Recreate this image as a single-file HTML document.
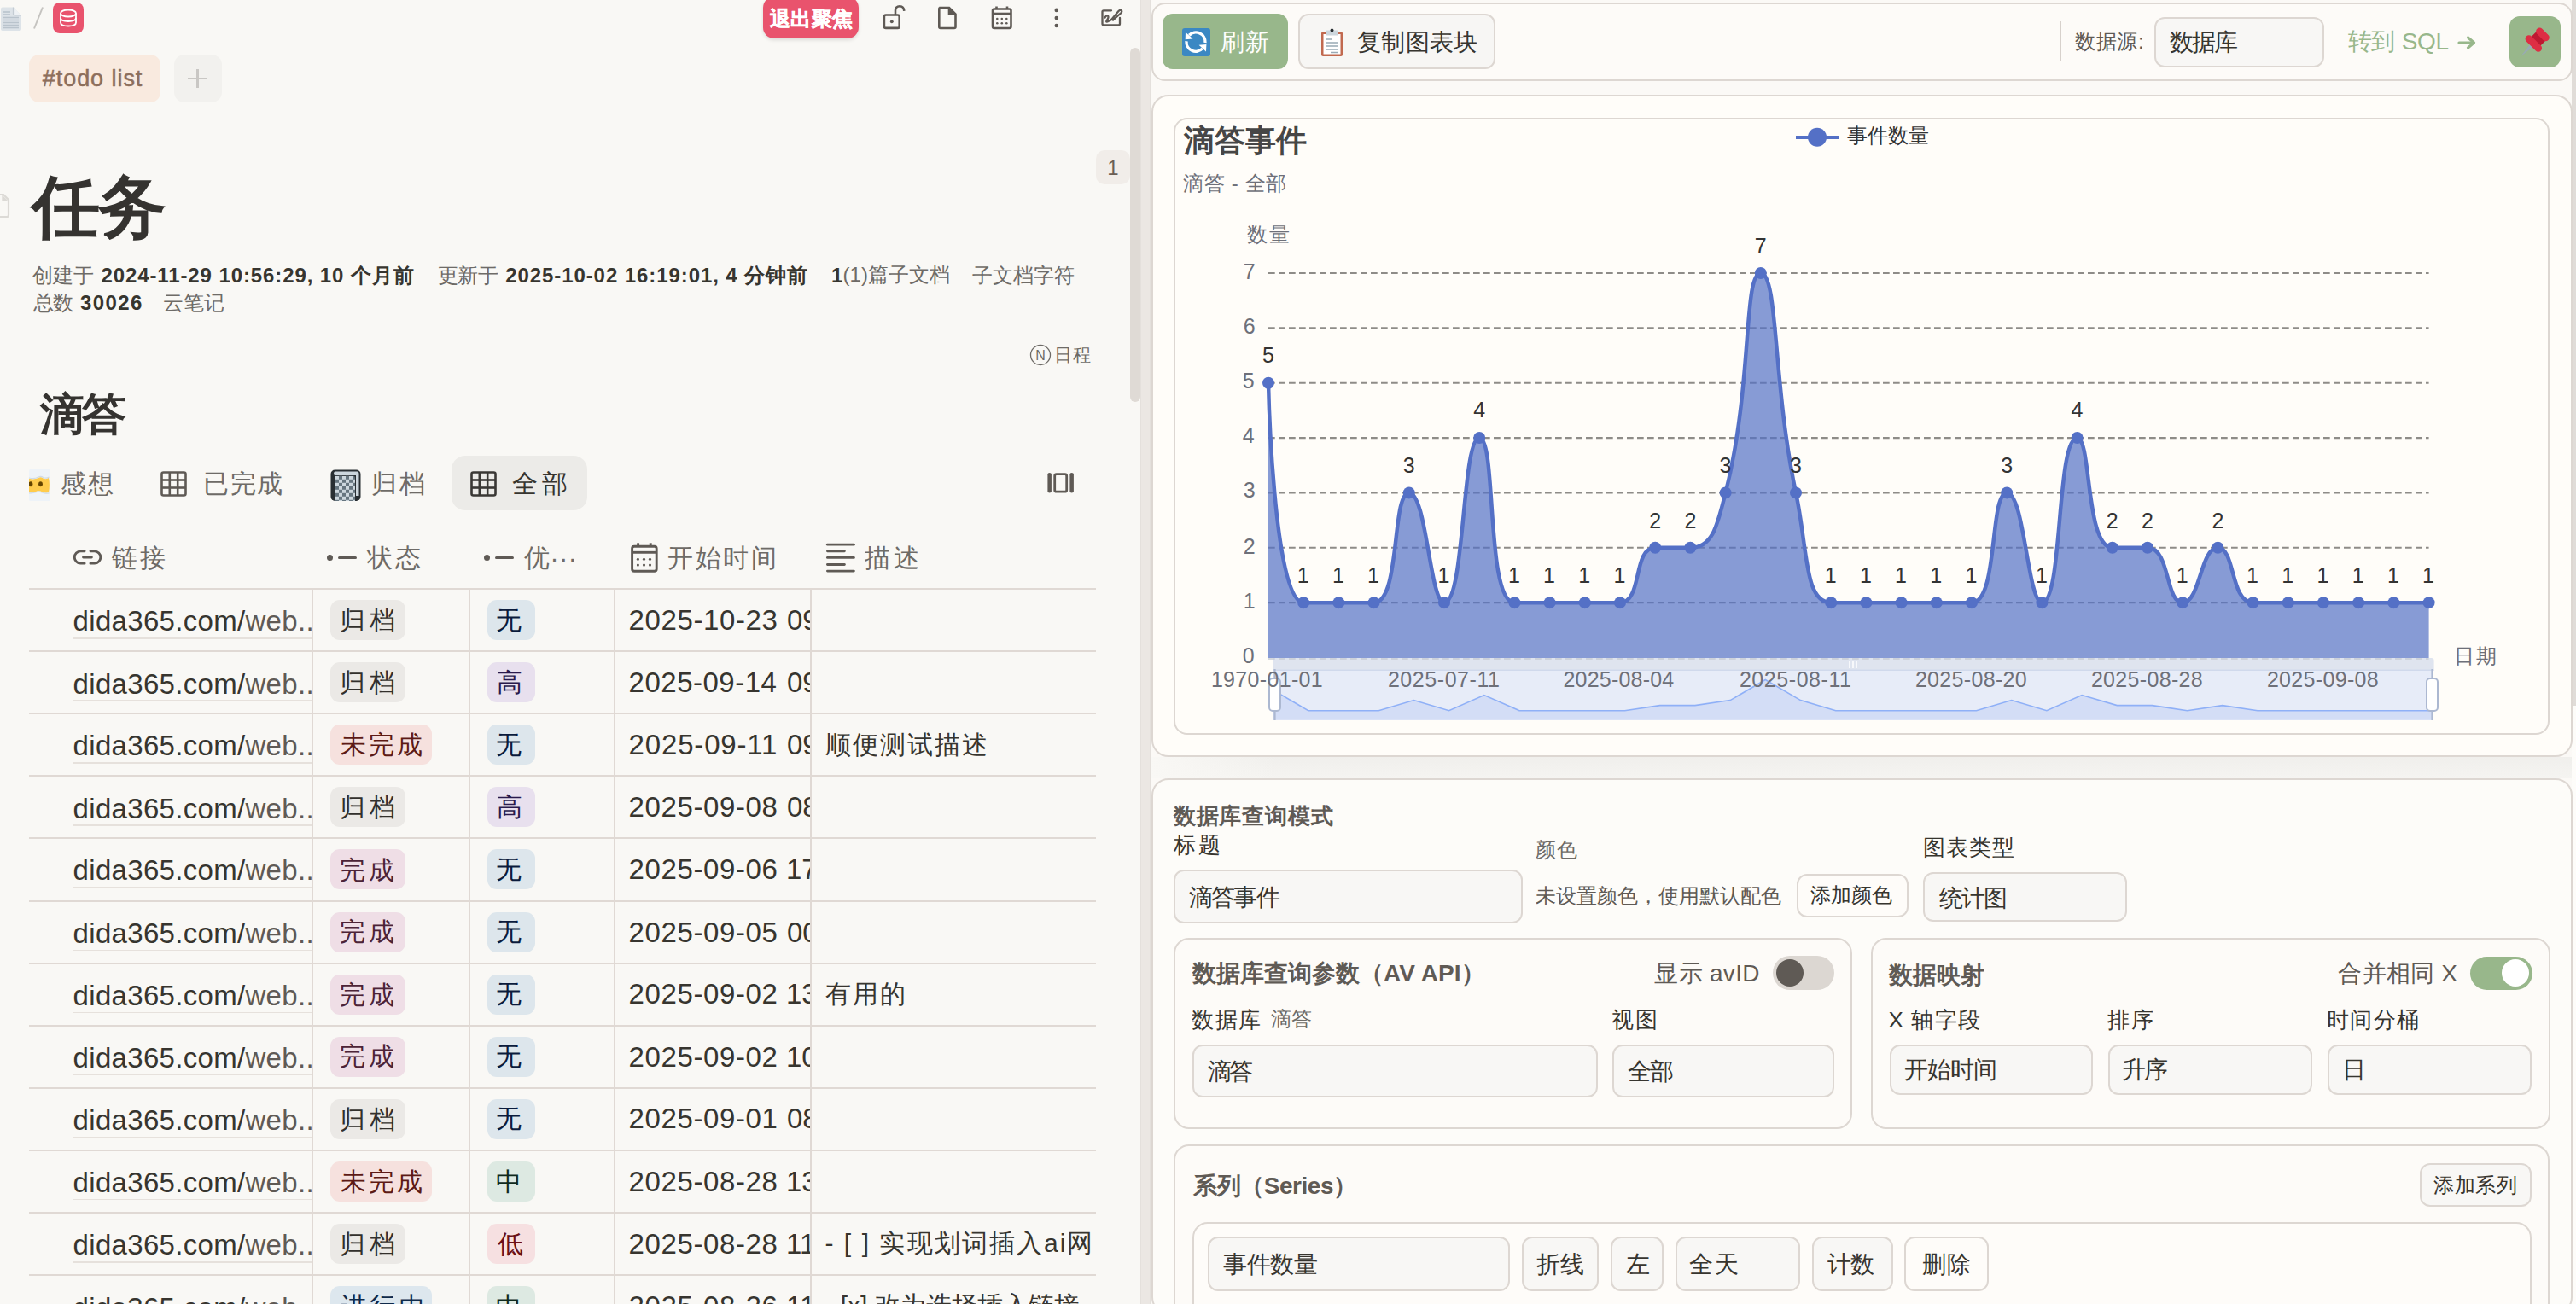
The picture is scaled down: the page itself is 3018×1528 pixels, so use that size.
<!DOCTYPE html>
<html><head><meta charset="utf-8"><style>
html,body{margin:0;padding:0;}
body{width:3018px;height:1528px;overflow:hidden;position:relative;background:#f9f8f5;font-family:'Liberation Sans',sans-serif;}
.t{position:absolute;white-space:nowrap;line-height:1;}
.r{position:absolute;}
b{font-weight:bold;}
</style></head><body>
<div class="r" style="left:0.0px;top:0.0px;width:1336.0px;height:1528.0px;background:#f9f8f5;border-radius:0px;"></div>
<svg class="r" style="left:0px;top:7px" width="28" height="32" viewBox="0 0 28 32"><path d="M2 1.5 H15.5 L25 11 V27 Q25 29 23 29 H3 Q1 29 1 27 V3.5 Q1 1.5 3 1.5Z" fill="#dde3e8"/><path d="M15.5 1.5 V9.5 Q15.5 11 17 11 H25" fill="#eef1f4" stroke="#c4ccd3" stroke-width="1.2"/><g stroke="#b9c3cc" stroke-width="1.6"><line x1="4" y1="7" x2="12" y2="7"/><line x1="4" y1="10" x2="12" y2="10"/><line x1="4" y1="13.5" x2="22" y2="13.5"/><line x1="4" y1="16.5" x2="22" y2="16.5"/><line x1="4" y1="19.5" x2="22" y2="19.5"/><line x1="4" y1="22.5" x2="22" y2="22.5"/><line x1="4" y1="25.5" x2="22" y2="25.5"/></g></svg>
<svg class="r" style="left:38px;top:7px" width="14" height="28"><line x1="12" y1="1.5" x2="2" y2="26.5" stroke="#c5c3c0" stroke-width="2"/></svg>
<div class="r" style="left:62.0px;top:3.0px;width:36.0px;height:36.0px;background:#e9536d;border-radius:8px;"></div>
<svg class="r" style="left:68px;top:9px" width="24" height="24" viewBox="0 0 24 24" fill="none" stroke="#fff" stroke-width="1.8"><ellipse cx="12" cy="6.5" rx="9" ry="4"/><path d="M3 6.5 V17.5 Q3 21.5 12 21.5 Q21 21.5 21 17.5 V6.5"/><path d="M3 12 Q3 16 12 16 Q21 16 21 12"/></svg>
<div class="r" style="left:894.0px;top:-4.5px;width:112.0px;height:49.5px;background:#e9536d;border-radius:13px;box-shadow:0 2px 4px rgba(0,0,0,0.12)"></div>
<div class="t" style="left:902.0px;top:10.0px;font-size:24px;color:#fff;font-weight:bold;letter-spacing:0.33px;-webkit-text-stroke:0.6px #fff">退出聚焦</div>
<svg class="r" style="left:1032px;top:5px" width="30" height="32" viewBox="0 0 30 32" fill="none" stroke="#5f5a55" stroke-width="2.6"><rect x="3.9" y="12.5" width="17.8" height="15.4" rx="2"/><path d="M17 12.5 V7.5 Q17 2.2 22.2 2.2 Q26.8 2.2 27.3 7.8"/><circle cx="12.8" cy="20.3" r="1.9" fill="#5f5a55" stroke="none"/></svg>
<svg class="r" style="left:1097px;top:6px" width="26" height="30" viewBox="0 0 26 30" fill="none" stroke="#5f5a55" stroke-width="2.6"><path d="M3.3 3 H15 L22.5 10.5 V25.5 Q22.5 27 21 27 H4.8 Q3.3 27 3.3 25.5 V4.5 Q3.3 3 4.8 3Z"/><path d="M15 3 V10.5 H22.5" fill="#5f5a55"/></svg>
<svg class="r" style="left:1160px;top:6px" width="28" height="30" viewBox="0 0 28 30" fill="none" stroke="#5f5a55" stroke-width="2.6"><rect x="3" y="4.5" width="21.5" height="22.5" rx="2"/><line x1="3" y1="10" x2="24.5" y2="10"/><line x1="7.5" y1="1.5" x2="7.5" y2="5"/><line x1="20" y1="1.5" x2="20" y2="5"/><g fill="#5f5a55" stroke="none"><circle cx="8.3" cy="16" r="1.3"/><circle cx="13.8" cy="16" r="1.3"/><circle cx="19.3" cy="16" r="1.3"/><circle cx="8.3" cy="21.3" r="1.3"/><circle cx="13.8" cy="21.3" r="1.3"/><circle cx="19.3" cy="21.3" r="1.3"/></g></svg>
<svg class="r" style="left:1232px;top:6px" width="12" height="30" viewBox="0 0 12 30" fill="#5f5a55"><circle cx="5.8" cy="5.9" r="2.3"/><circle cx="5.8" cy="15" r="2.3"/><circle cx="5.8" cy="24" r="2.3"/></svg>
<svg class="r" style="left:1288px;top:8px" width="28" height="24" viewBox="0 0 28 24" fill="none" stroke="#5f5a55" stroke-width="2.3" stroke-linecap="round"><path d="M14 4.3 H5 Q3.5 4.3 3.5 5.8 V19.8 Q3.5 21.3 5 21.3 H22.5 Q24 21.3 24 19.8 V13"/><path d="M6.5 12.5 Q8.5 9.5 10 10.5 Q11.5 12 8.5 16.5 Q7.5 18 9.5 17.5 L13.5 15.5"/><path d="M14.5 14.5 L22.5 5 Q24.5 3 25.8 4.3 Q27 5.6 25 7.5 L16 15.5 Z"/></svg>
<div class="r" style="left:34.0px;top:64.0px;width:154.0px;height:56.0px;background:#f9eadf;border-radius:12px;"></div>
<div class="t" style="left:49.8px;top:79.2px;font-size:27px;color:#8d6e5b;font-weight:normal;letter-spacing:0.94px;-webkit-text-stroke:0.5px #8d6e5b">#todo list</div>
<div class="r" style="left:204.0px;top:64.0px;width:56.0px;height:56.0px;background:#f2f1ee;border-radius:12px;"></div>
<div class="r" style="left:220.3px;top:90.6px;width:22.9px;height:2.8px;background:#c9c7c4;border-radius:0px;"></div>
<div class="r" style="left:230.4px;top:80.5px;width:2.8px;height:22.5px;background:#c9c7c4;border-radius:0px;"></div>
<svg class="r" style="left:-6px;top:226px" width="18" height="30" viewBox="0 0 18 30" fill="none" stroke="#dcdad6" stroke-width="2.2"><path d="M1 2 H10 L16 8 V26 Q16 28 14 28 H1"/><path d="M8.3,2.2 V9.8 H15.8Z" fill="#dcdad6" stroke="none"/></svg>
<div class="t" style="left:37.0px;top:203.1px;font-size:80px;color:#353330;font-weight:bold;letter-spacing:-2.00px;">任务</div>
<div class="t" style="left:38.2px;top:311.0px;font-size:24px;color:#6e6b67;font-weight:normal;letter-spacing:-0.25px;">创建于</div>
<div class="t" style="left:118.4px;top:310.5px;font-size:24px;color:#37352f;font-weight:bold;letter-spacing:0.90px;">2024-11-29 10:56:29, 10 个月前</div>
<div class="t" style="left:512.6px;top:311.0px;font-size:24px;color:#6e6b67;font-weight:normal;letter-spacing:-0.50px;">更新于</div>
<div class="t" style="left:592.2px;top:310.5px;font-size:24px;color:#37352f;font-weight:bold;letter-spacing:0.92px;">2025-10-02 16:19:01, 4 分钟前</div>
<div class="t" style="left:974.0px;top:311.0px;font-size:24px;color:#37352f;font-weight:bold;">1</div>
<div class="t" style="left:987.4px;top:310.0px;font-size:24px;color:#6e6b67;font-weight:normal;letter-spacing:0.08px;">(1)篇子文档</div>
<div class="t" style="left:1138.8px;top:311.0px;font-size:24px;color:#6e6b67;font-weight:normal;letter-spacing:0.00px;">子文档字符</div>
<div class="t" style="left:38.8px;top:342.5px;font-size:24px;color:#6e6b67;font-weight:normal;letter-spacing:-1.00px;">总数</div>
<div class="t" style="left:94.0px;top:343.0px;font-size:24px;color:#37352f;font-weight:bold;letter-spacing:1.38px;">30026</div>
<div class="t" style="left:191.0px;top:342.5px;font-size:24px;color:#6e6b67;font-weight:normal;">云笔记</div>
<div class="r" style="left:1284.0px;top:176.0px;width:40.0px;height:40.0px;background:#f1ede9;border-radius:10px;"></div>
<div class="t" style="left:1284.0px;top:184.5px;width:40px;text-align:center;font-size:24px;color:#6b5f55;font-weight:normal;">1</div>
<svg class="r" style="left:1206px;top:403px" width="27" height="27"><circle cx="13" cy="13" r="11.5" fill="none" stroke="#6e6b67" stroke-width="1.3"/><text x="13" y="19" text-anchor="middle" font-size="16" fill="#6e6b67" font-family="Liberation Sans">N</text></svg>
<div class="t" style="left:1235.0px;top:405.0px;font-size:21px;color:#6e6b67;font-weight:normal;letter-spacing:1.00px;">日程</div>
<div class="r" style="left:1324.0px;top:56.0px;width:12.0px;height:415.0px;background:#dfdad5;border-radius:6px;"></div>
<div class="t" style="left:47.0px;top:459.0px;font-size:52px;color:#353330;font-weight:bold;letter-spacing:-3.00px;">滴答</div>
<svg class="r" style="left:33.9px;top:549.9px" width="25" height="37" viewBox="0 0 25 37"><rect width="25" height="37" rx="1.5" fill="#eef3f8"/><path d="M0 10.8 Q6 12.5 11 10 Q14 8.5 16.5 10.5 Q20 12 23 10 Q24.8 18 23 27 Q19 28 16 26.5 Q11 24.5 8 26 Q4 27.5 0 27Z" fill="#ffcc4d"/><path d="M0 10 Q6 11.5 11 9 Q14 7.5 16.5 9.5 Q20 11 23.5 9" fill="none" stroke="#cfdbe7" stroke-width="1.2"/><path d="M0 27.8 Q4 28.3 8 26.8 Q11 25.3 16 27.3 Q19 28.8 23.5 27.8" fill="none" stroke="#cfdbe7" stroke-width="1.2"/><ellipse cx="2" cy="17.2" rx="2.4" ry="3" fill="#664500"/><ellipse cx="13.5" cy="17.2" rx="2.4" ry="3" fill="#664500"/></svg>
<div class="t" style="left:71.0px;top:552.3px;font-size:30px;color:#6e6b67;font-weight:normal;letter-spacing:2.00px;">感想</div>
<svg class="r" style="left:188px;top:552.2px" width="31" height="30" viewBox="0 0 31 30" fill="none" stroke="#5f5a55" stroke-width="2.6"><rect x="1.5" y="1.5" width="28" height="27" rx="2"/><line x1="10.8" y1="1.5" x2="10.8" y2="28.5"/><line x1="20.2" y1="1.5" x2="20.2" y2="28.5"/><line x1="1.5" y1="10.5" x2="29.5" y2="10.5"/><line x1="1.5" y1="19.5" x2="29.5" y2="19.5"/></svg>
<div class="t" style="left:238.0px;top:552.3px;font-size:30px;color:#6e6b67;font-weight:normal;letter-spacing:1.50px;">已完成</div>
<svg class="r" style="left:387px;top:549.9px" width="36" height="38" viewBox="0 0 36 38"><defs><pattern id="chk" x="6" y="7.8" width="8" height="8" patternUnits="userSpaceOnUse"><rect width="8" height="8" fill="#ccd6dd"/><rect x="4" width="4" height="4" fill="#66757f"/><rect y="4" width="4" height="4" fill="#66757f"/></pattern></defs><rect x="0.5" y="0.5" width="35" height="36.5" rx="5" fill="#292f33"/><rect x="4" y="2.6" width="29.5" height="4.5" rx="2.2" fill="#ccd6dd"/><rect x="30" y="5" width="3.5" height="26" fill="#ccd6dd"/><path d="M6 7.8 H27 Q29 7.8 29 10 V37 H6Z" fill="url(#chk)"/></svg>
<div class="t" style="left:435.0px;top:552.3px;font-size:30px;color:#6e6b67;font-weight:normal;letter-spacing:2.50px;">归档</div>
<div class="r" style="left:529.0px;top:534.0px;width:159.0px;height:64.0px;background:#ecebe8;border-radius:16px;"></div>
<svg class="r" style="left:551px;top:552.2px" width="31" height="30" viewBox="0 0 31 30" fill="none" stroke="#3a3835" stroke-width="2.6"><rect x="1.5" y="1.5" width="28" height="27" rx="2"/><line x1="10.8" y1="1.5" x2="10.8" y2="28.5"/><line x1="20.2" y1="1.5" x2="20.2" y2="28.5"/><line x1="1.5" y1="10.5" x2="29.5" y2="10.5"/><line x1="1.5" y1="19.5" x2="29.5" y2="19.5"/></svg>
<div class="t" style="left:600.0px;top:552.3px;font-size:30px;color:#37352f;font-weight:normal;letter-spacing:5.00px;">全部</div>
<svg class="r" style="left:1225px;top:553px" width="36" height="26" viewBox="0 0 36 26" fill="none" stroke="#5f5a55"><line x1="4.65" y1="3.25" x2="4.65" y2="22.15" stroke-width="4.5" stroke-linecap="round"/><line x1="30.65" y1="3.25" x2="30.65" y2="22.15" stroke-width="4.5" stroke-linecap="round"/><rect x="10.7" y="2.7" width="14" height="20.5" rx="2" stroke-width="2.8"/></svg>
<svg class="r" style="left:84px;top:643px" width="38" height="21" viewBox="0 0 38 21" fill="none" stroke="#5f5a55" stroke-width="2.9" stroke-linecap="round"><path d="M15.1,2.85 H10.4 A7.15,7.15 0 0 0 10.4,17.15 H15.1"/><path d="M21.95,2.85 H26.7 A7.15,7.15 0 0 1 26.7,17.15 H21.95"/><path d="M13.55,10 H23.35"/></svg>
<div class="t" style="left:131.4px;top:639.1px;font-size:30px;color:#6e6b67;font-weight:normal;letter-spacing:3.00px;">链接</div>
<div class="r" style="left:383.2px;top:650.1px;width:6.7px;height:6.7px;background:#5f5a55;border-radius:4px;"></div>
<div class="r" style="left:395.5px;top:652.0px;width:22.2px;height:3.1px;background:#5f5a55;border-radius:2px;"></div>
<div class="t" style="left:429.8px;top:639.1px;font-size:30px;color:#6e6b67;font-weight:normal;letter-spacing:3.50px;">状态</div>
<div class="r" style="left:567.2px;top:650.1px;width:6.7px;height:6.7px;background:#5f5a55;border-radius:4px;"></div>
<div class="r" style="left:579.5px;top:652.0px;width:22.2px;height:3.1px;background:#5f5a55;border-radius:2px;"></div>
<div class="t" style="left:613.8px;top:638.6px;font-size:30px;color:#6e6b67;font-weight:normal;letter-spacing:0.67px;">优···</div>
<svg class="r" style="left:738px;top:635px" width="34" height="38" viewBox="0 0 34 38" fill="none" stroke="#5f5a55" stroke-width="2.9"><rect x="2.6" y="5.3" width="28.6" height="29" rx="2.5"/><line x1="2.6" y1="12.3" x2="31.2" y2="12.3"/><line x1="9.6" y1="1.3" x2="9.6" y2="5.5"/><line x1="24.2" y1="1.3" x2="24.2" y2="5.5"/><g fill="#5f5a55" stroke="none"><circle cx="9.4" cy="20.2" r="1.55"/><circle cx="16.5" cy="20.2" r="1.55"/><circle cx="23.5" cy="20.2" r="1.55"/><circle cx="9.4" cy="27.1" r="1.55"/><circle cx="16.5" cy="27.1" r="1.55"/><circle cx="23.5" cy="27.1" r="1.55"/></g></svg>
<div class="t" style="left:782.2px;top:639.1px;font-size:30px;color:#6e6b67;font-weight:normal;letter-spacing:2.50px;">开始时间</div>
<svg class="r" style="left:966px;top:636px" width="38" height="36" viewBox="0 0 38 36" fill="none" stroke="#5f5a55" stroke-width="2.8" stroke-linecap="round"><line x1="3.4" y1="2.2" x2="34.4" y2="2.2"/><line x1="3.4" y1="9.8" x2="23.4" y2="9.8"/><line x1="3.4" y1="17.4" x2="34.4" y2="17.4"/><line x1="3.4" y1="25.5" x2="23.4" y2="25.5"/><line x1="3.4" y1="33.1" x2="34.4" y2="33.1"/></svg>
<div class="t" style="left:1013.0px;top:639.1px;font-size:30px;color:#6e6b67;font-weight:normal;letter-spacing:4.00px;">描述</div>
<div class="r" style="left:34.0px;top:689.0px;width:1250.0px;height:2.0px;background:#e0d9d4;border-radius:0px;"></div>
<div class="r" style="left:34.0px;top:762.1px;width:1250.0px;height:2.0px;background:#e0d9d4;border-radius:0px;"></div>
<div class="r" style="left:34.0px;top:835.2px;width:1250.0px;height:2.0px;background:#e0d9d4;border-radius:0px;"></div>
<div class="r" style="left:34.0px;top:908.3px;width:1250.0px;height:2.0px;background:#e0d9d4;border-radius:0px;"></div>
<div class="r" style="left:34.0px;top:981.4px;width:1250.0px;height:2.0px;background:#e0d9d4;border-radius:0px;"></div>
<div class="r" style="left:34.0px;top:1054.5px;width:1250.0px;height:2.0px;background:#e0d9d4;border-radius:0px;"></div>
<div class="r" style="left:34.0px;top:1127.6px;width:1250.0px;height:2.0px;background:#e0d9d4;border-radius:0px;"></div>
<div class="r" style="left:34.0px;top:1200.7px;width:1250.0px;height:2.0px;background:#e0d9d4;border-radius:0px;"></div>
<div class="r" style="left:34.0px;top:1273.8px;width:1250.0px;height:2.0px;background:#e0d9d4;border-radius:0px;"></div>
<div class="r" style="left:34.0px;top:1346.9px;width:1250.0px;height:2.0px;background:#e0d9d4;border-radius:0px;"></div>
<div class="r" style="left:34.0px;top:1420.0px;width:1250.0px;height:2.0px;background:#e0d9d4;border-radius:0px;"></div>
<div class="r" style="left:34.0px;top:1493.1px;width:1250.0px;height:2.0px;background:#e0d9d4;border-radius:0px;"></div>
<div class="r" style="left:365.0px;top:690.0px;width:2.0px;height:838.0px;background:#e0d9d4;border-radius:0px;"></div>
<div class="r" style="left:549.0px;top:690.0px;width:2.0px;height:838.0px;background:#e0d9d4;border-radius:0px;"></div>
<div class="r" style="left:719.0px;top:690.0px;width:2.0px;height:838.0px;background:#e0d9d4;border-radius:0px;"></div>
<div class="r" style="left:948.5px;top:690.0px;width:2.0px;height:838.0px;background:#e0d9d4;border-radius:0px;"></div>
<div class="t" style="left:85.6px;top:711.0px;font-size:33px;color:#37352f;font-weight:normal;letter-spacing:0.31px;">dida365.com/<span style="color:#5f5a55">web..</span></div>
<div class="r" style="left:85.0px;top:747.0px;width:280.0px;height:1.5px;background:#e6e1dc;border-radius:0px;"></div>
<div class="r" style="left:387.0px;top:703.0px;width:88.0px;height:47.0px;background:#ebe9e6;border-radius:11px;"></div>
<div class="t" style="left:398.0px;top:712.1px;font-size:30px;color:#32302c;font-weight:normal;letter-spacing:4.50px;">归档</div>
<div class="r" style="left:571.0px;top:703.0px;width:56.0px;height:47.0px;background:#dde6ec;border-radius:11px;"></div>
<div class="t" style="left:581.0px;top:711.6px;font-size:30px;color:#0b1b3c;font-weight:normal;">无</div>
<div class="r" style="left:721px;top:691.0px;width:227.5px;height:71px;overflow:hidden">
<div class="t" style="left:15.6px;top:18.7px;font-size:33px;color:#37352f;font-weight:normal;letter-spacing:0.61px;">2025-10-23</div>
<div class="t" style="left:201.0px;top:18.7px;font-size:33px;color:#37352f;font-weight:normal;">09</div>
</div>
<div class="t" style="left:85.6px;top:784.6px;font-size:33px;color:#37352f;font-weight:normal;letter-spacing:0.31px;">dida365.com/<span style="color:#5f5a55">web..</span></div>
<div class="r" style="left:85.0px;top:820.1px;width:280.0px;height:1.5px;background:#e6e1dc;border-radius:0px;"></div>
<div class="r" style="left:387.0px;top:776.1px;width:88.0px;height:47.0px;background:#ebe9e6;border-radius:11px;"></div>
<div class="t" style="left:398.0px;top:784.7px;font-size:30px;color:#32302c;font-weight:normal;letter-spacing:4.50px;">归档</div>
<div class="r" style="left:571.0px;top:776.1px;width:56.0px;height:47.0px;background:#e8e0ee;border-radius:11px;"></div>
<div class="t" style="left:582.0px;top:784.7px;font-size:30px;color:#2a1a4c;font-weight:normal;">高</div>
<div class="r" style="left:721px;top:764.1px;width:227.5px;height:71px;overflow:hidden">
<div class="t" style="left:15.6px;top:19.2px;font-size:33px;color:#37352f;font-weight:normal;letter-spacing:0.50px;">2025-09-14</div>
<div class="t" style="left:201.0px;top:19.2px;font-size:33px;color:#37352f;font-weight:normal;">09</div>
</div>
<div class="t" style="left:85.6px;top:857.2px;font-size:33px;color:#37352f;font-weight:normal;letter-spacing:0.31px;">dida365.com/<span style="color:#5f5a55">web..</span></div>
<div class="r" style="left:85.0px;top:893.2px;width:280.0px;height:1.5px;background:#e6e1dc;border-radius:0px;"></div>
<div class="r" style="left:387.0px;top:849.2px;width:118.5px;height:47.0px;background:#f6e1de;border-radius:11px;"></div>
<div class="t" style="left:399.0px;top:858.3px;font-size:30px;color:#5d1a15;font-weight:normal;letter-spacing:2.75px;">未完成</div>
<div class="r" style="left:571.0px;top:849.2px;width:56.0px;height:47.0px;background:#dde6ec;border-radius:11px;"></div>
<div class="t" style="left:581.0px;top:857.8px;font-size:30px;color:#0b1b3c;font-weight:normal;">无</div>
<div class="r" style="left:721px;top:837.2px;width:227.5px;height:71px;overflow:hidden">
<div class="t" style="left:15.6px;top:18.7px;font-size:33px;color:#37352f;font-weight:normal;letter-spacing:0.83px;">2025-09-11</div>
<div class="t" style="left:201.0px;top:18.7px;font-size:33px;color:#37352f;font-weight:normal;">09</div>
</div>
<div class="t" style="left:966.8px;top:857.7px;font-size:30px;color:#37352f;font-weight:normal;letter-spacing:2.10px;">顺便测试描述</div>
<div class="t" style="left:85.6px;top:930.8px;font-size:33px;color:#37352f;font-weight:normal;letter-spacing:0.31px;">dida365.com/<span style="color:#5f5a55">web..</span></div>
<div class="r" style="left:85.0px;top:966.3px;width:280.0px;height:1.5px;background:#e6e1dc;border-radius:0px;"></div>
<div class="r" style="left:387.0px;top:922.3px;width:88.0px;height:47.0px;background:#ebe9e6;border-radius:11px;"></div>
<div class="t" style="left:398.0px;top:930.9px;font-size:30px;color:#32302c;font-weight:normal;letter-spacing:4.50px;">归档</div>
<div class="r" style="left:571.0px;top:922.3px;width:56.0px;height:47.0px;background:#e8e0ee;border-radius:11px;"></div>
<div class="t" style="left:582.0px;top:930.9px;font-size:30px;color:#2a1a4c;font-weight:normal;">高</div>
<div class="r" style="left:721px;top:910.3px;width:227.5px;height:71px;overflow:hidden">
<div class="t" style="left:15.6px;top:19.2px;font-size:33px;color:#37352f;font-weight:normal;letter-spacing:0.61px;">2025-09-08</div>
<div class="t" style="left:201.0px;top:19.2px;font-size:33px;color:#37352f;font-weight:normal;">08</div>
</div>
<div class="t" style="left:85.6px;top:1003.4px;font-size:33px;color:#37352f;font-weight:normal;letter-spacing:0.31px;">dida365.com/<span style="color:#5f5a55">web..</span></div>
<div class="r" style="left:85.0px;top:1039.4px;width:280.0px;height:1.5px;background:#e6e1dc;border-radius:0px;"></div>
<div class="r" style="left:387.0px;top:995.4px;width:88.0px;height:47.0px;background:#efdee6;border-radius:11px;"></div>
<div class="t" style="left:398.0px;top:1004.5px;font-size:30px;color:#4c2337;font-weight:normal;letter-spacing:3.50px;">完成</div>
<div class="r" style="left:571.0px;top:995.4px;width:56.0px;height:47.0px;background:#dde6ec;border-radius:11px;"></div>
<div class="t" style="left:581.0px;top:1004.0px;font-size:30px;color:#0b1b3c;font-weight:normal;">无</div>
<div class="r" style="left:721px;top:983.4px;width:227.5px;height:71px;overflow:hidden">
<div class="t" style="left:15.6px;top:18.7px;font-size:33px;color:#37352f;font-weight:normal;letter-spacing:0.61px;">2025-09-06</div>
<div class="t" style="left:200.0px;top:18.7px;font-size:33px;color:#37352f;font-weight:normal;">17</div>
</div>
<div class="t" style="left:85.6px;top:1077.0px;font-size:33px;color:#37352f;font-weight:normal;letter-spacing:0.31px;">dida365.com/<span style="color:#5f5a55">web..</span></div>
<div class="r" style="left:85.0px;top:1112.5px;width:280.0px;height:1.5px;background:#e6e1dc;border-radius:0px;"></div>
<div class="r" style="left:387.0px;top:1068.5px;width:88.0px;height:47.0px;background:#efdee6;border-radius:11px;"></div>
<div class="t" style="left:398.0px;top:1077.1px;font-size:30px;color:#4c2337;font-weight:normal;letter-spacing:3.50px;">完成</div>
<div class="r" style="left:571.0px;top:1068.5px;width:56.0px;height:47.0px;background:#dde6ec;border-radius:11px;"></div>
<div class="t" style="left:581.0px;top:1076.6px;font-size:30px;color:#0b1b3c;font-weight:normal;">无</div>
<div class="r" style="left:721px;top:1056.5px;width:227.5px;height:71px;overflow:hidden">
<div class="t" style="left:15.6px;top:19.2px;font-size:33px;color:#37352f;font-weight:normal;letter-spacing:0.61px;">2025-09-05</div>
<div class="t" style="left:201.0px;top:19.2px;font-size:33px;color:#37352f;font-weight:normal;">00</div>
</div>
<div class="t" style="left:85.6px;top:1149.6px;font-size:33px;color:#37352f;font-weight:normal;letter-spacing:0.31px;">dida365.com/<span style="color:#5f5a55">web..</span></div>
<div class="r" style="left:85.0px;top:1185.6px;width:280.0px;height:1.5px;background:#e6e1dc;border-radius:0px;"></div>
<div class="r" style="left:387.0px;top:1141.6px;width:88.0px;height:47.0px;background:#efdee6;border-radius:11px;"></div>
<div class="t" style="left:398.0px;top:1150.7px;font-size:30px;color:#4c2337;font-weight:normal;letter-spacing:3.50px;">完成</div>
<div class="r" style="left:571.0px;top:1141.6px;width:56.0px;height:47.0px;background:#dde6ec;border-radius:11px;"></div>
<div class="t" style="left:581.0px;top:1150.2px;font-size:30px;color:#0b1b3c;font-weight:normal;">无</div>
<div class="r" style="left:721px;top:1129.6px;width:227.5px;height:71px;overflow:hidden">
<div class="t" style="left:15.6px;top:18.7px;font-size:33px;color:#37352f;font-weight:normal;letter-spacing:0.61px;">2025-09-02</div>
<div class="t" style="left:200.0px;top:18.7px;font-size:33px;color:#37352f;font-weight:normal;">13</div>
</div>
<div class="t" style="left:966.8px;top:1149.6px;font-size:30px;color:#37352f;font-weight:normal;letter-spacing:2.25px;">有用的</div>
<div class="t" style="left:85.6px;top:1223.2px;font-size:33px;color:#37352f;font-weight:normal;letter-spacing:0.31px;">dida365.com/<span style="color:#5f5a55">web..</span></div>
<div class="r" style="left:85.0px;top:1258.7px;width:280.0px;height:1.5px;background:#e6e1dc;border-radius:0px;"></div>
<div class="r" style="left:387.0px;top:1214.7px;width:88.0px;height:47.0px;background:#efdee6;border-radius:11px;"></div>
<div class="t" style="left:398.0px;top:1223.3px;font-size:30px;color:#4c2337;font-weight:normal;letter-spacing:3.50px;">完成</div>
<div class="r" style="left:571.0px;top:1214.7px;width:56.0px;height:47.0px;background:#dde6ec;border-radius:11px;"></div>
<div class="t" style="left:581.0px;top:1222.8px;font-size:30px;color:#0b1b3c;font-weight:normal;">无</div>
<div class="r" style="left:721px;top:1202.7px;width:227.5px;height:71px;overflow:hidden">
<div class="t" style="left:15.6px;top:19.2px;font-size:33px;color:#37352f;font-weight:normal;letter-spacing:0.61px;">2025-09-02</div>
<div class="t" style="left:200.0px;top:19.2px;font-size:33px;color:#37352f;font-weight:normal;">10</div>
</div>
<div class="t" style="left:85.6px;top:1295.8px;font-size:33px;color:#37352f;font-weight:normal;letter-spacing:0.31px;">dida365.com/<span style="color:#5f5a55">web..</span></div>
<div class="r" style="left:85.0px;top:1331.8px;width:280.0px;height:1.5px;background:#e6e1dc;border-radius:0px;"></div>
<div class="r" style="left:387.0px;top:1287.8px;width:88.0px;height:47.0px;background:#ebe9e6;border-radius:11px;"></div>
<div class="t" style="left:398.0px;top:1296.9px;font-size:30px;color:#32302c;font-weight:normal;letter-spacing:4.50px;">归档</div>
<div class="r" style="left:571.0px;top:1287.8px;width:56.0px;height:47.0px;background:#dde6ec;border-radius:11px;"></div>
<div class="t" style="left:581.0px;top:1296.4px;font-size:30px;color:#0b1b3c;font-weight:normal;">无</div>
<div class="r" style="left:721px;top:1275.8px;width:227.5px;height:71px;overflow:hidden">
<div class="t" style="left:15.6px;top:18.7px;font-size:33px;color:#37352f;font-weight:normal;letter-spacing:0.61px;">2025-09-01</div>
<div class="t" style="left:201.0px;top:18.7px;font-size:33px;color:#37352f;font-weight:normal;">08</div>
</div>
<div class="t" style="left:85.6px;top:1369.4px;font-size:33px;color:#37352f;font-weight:normal;letter-spacing:0.31px;">dida365.com/<span style="color:#5f5a55">web..</span></div>
<div class="r" style="left:85.0px;top:1404.9px;width:280.0px;height:1.5px;background:#e6e1dc;border-radius:0px;"></div>
<div class="r" style="left:387.0px;top:1360.9px;width:118.5px;height:47.0px;background:#f6e1de;border-radius:11px;"></div>
<div class="t" style="left:399.0px;top:1369.5px;font-size:30px;color:#5d1a15;font-weight:normal;letter-spacing:2.75px;">未完成</div>
<div class="r" style="left:571.0px;top:1360.9px;width:56.0px;height:47.0px;background:#dde9e2;border-radius:11px;"></div>
<div class="t" style="left:581.0px;top:1370.0px;font-size:30px;color:#0f2a1c;font-weight:normal;">中</div>
<div class="r" style="left:721px;top:1348.9px;width:227.5px;height:71px;overflow:hidden">
<div class="t" style="left:15.6px;top:19.2px;font-size:33px;color:#37352f;font-weight:normal;letter-spacing:0.61px;">2025-08-28</div>
<div class="t" style="left:200.0px;top:19.2px;font-size:33px;color:#37352f;font-weight:normal;">13</div>
</div>
<div class="t" style="left:85.6px;top:1442.0px;font-size:33px;color:#37352f;font-weight:normal;letter-spacing:0.31px;">dida365.com/<span style="color:#5f5a55">web..</span></div>
<div class="r" style="left:85.0px;top:1478.0px;width:280.0px;height:1.5px;background:#e6e1dc;border-radius:0px;"></div>
<div class="r" style="left:387.0px;top:1434.0px;width:88.0px;height:47.0px;background:#ebe9e6;border-radius:11px;"></div>
<div class="t" style="left:398.0px;top:1443.1px;font-size:30px;color:#32302c;font-weight:normal;letter-spacing:4.50px;">归档</div>
<div class="r" style="left:571.0px;top:1434.0px;width:56.0px;height:47.0px;background:#f6e0e1;border-radius:11px;"></div>
<div class="t" style="left:583.0px;top:1442.6px;font-size:30px;color:#6a1016;font-weight:normal;">低</div>
<div class="r" style="left:721px;top:1422.0px;width:227.5px;height:71px;overflow:hidden">
<div class="t" style="left:15.6px;top:18.7px;font-size:33px;color:#37352f;font-weight:normal;letter-spacing:0.61px;">2025-08-28</div>
<div class="t" style="left:200.0px;top:18.7px;font-size:33px;color:#37352f;font-weight:normal;">11</div>
</div>
<div class="r" style="left:951px;top:1422.0px;width:333px;height:71px;overflow:hidden">
<div class="t" style="left:15.4px;top:19.5px;font-size:30px;color:#37352f;font-weight:normal;letter-spacing:2.07px;">- [ ] 实现划词插入ai网</div>
</div>
<div class="t" style="left:85.6px;top:1515.6px;font-size:33px;color:#37352f;font-weight:normal;letter-spacing:0.31px;">dida365.com/<span style="color:#5f5a55">web..</span></div>
<div class="r" style="left:85.0px;top:1551.1px;width:280.0px;height:1.5px;background:#e6e1dc;border-radius:0px;"></div>
<div class="r" style="left:387.0px;top:1507.1px;width:118.5px;height:47.0px;background:#dde7ee;border-radius:11px;"></div>
<div class="t" style="left:399.0px;top:1515.7px;font-size:30px;color:#0f2a4a;font-weight:normal;letter-spacing:4.25px;">进行中</div>
<div class="r" style="left:571.0px;top:1507.1px;width:56.0px;height:47.0px;background:#dde9e2;border-radius:11px;"></div>
<div class="t" style="left:581.0px;top:1516.2px;font-size:30px;color:#0f2a1c;font-weight:normal;">中</div>
<div class="r" style="left:721px;top:1495.1px;width:227.5px;height:71px;overflow:hidden">
<div class="t" style="left:15.6px;top:19.2px;font-size:33px;color:#37352f;font-weight:normal;letter-spacing:0.61px;">2025-08-26</div>
<div class="t" style="left:200.0px;top:19.2px;font-size:33px;color:#37352f;font-weight:normal;">11</div>
</div>
<div class="r" style="left:951px;top:1495.1px;width:333px;height:71px;overflow:hidden">
<div class="t" style="left:15.4px;top:20.0px;font-size:30px;color:#37352f;font-weight:normal;">- [x] 改为选择插入链接</div>
</div>
<div class="r" style="left:1336.0px;top:0.0px;width:12.0px;height:1528.0px;background:#ebe7e3;border-radius:0px;"></div>
<div class="r" style="left:1336.0px;top:0.0px;width:1.0px;height:1528.0px;background:#e4e0dc;border-radius:0px;"></div>
<div class="r" style="left:1347.0px;top:0.0px;width:1.0px;height:1528.0px;background:#e4e0dc;border-radius:0px;"></div>
<div class="r" style="left:1348.0px;top:0.0px;width:1670.0px;height:1528.0px;background:#fbf9f6;border-radius:0px;"></div>
<div class="r" style="left:3013.0px;top:0.0px;width:5.0px;height:827.0px;background:#e0dcd8;border-radius:0px;"></div>
<div class="r" style="left:3013.0px;top:827.0px;width:5.0px;height:701.0px;background:#fdfcf9;border-radius:0px;"></div>
<div class="r" style="left:1348.5px;top:2.5px;width:1665.0px;height:92.6px;background:#fdfbf8;border-radius:16px;border:2px solid #ddd7d2;box-sizing:border-box;"></div>
<div class="r" style="left:1362.0px;top:16.0px;width:147.0px;height:65.0px;background:#98b78b;border-radius:12px;"></div>
<svg class="r" style="left:1385px;top:33px" width="33" height="33" viewBox="0 0 33 33"><rect width="33" height="33" rx="3" fill="#3b88c3"/><path d="M8.2,8.3 A11,11 0 0 1 27,17" fill="none" stroke="#fff" stroke-width="3.4"/><path d="M4,4.7 L3.7,13.2 L12.5,12.5Z" fill="#fff"/><path d="M5,15.25 A11,11 0 0 0 23.8,23.9" fill="none" stroke="#fff" stroke-width="3.4"/><path d="M28,27.5 L28.4,19 L19.6,19.7Z" fill="#fff"/></svg>
<div class="t" style="left:1430.4px;top:36.2px;font-size:28px;color:#fff;font-weight:normal;letter-spacing:1.00px;">刷新</div>
<div class="r" style="left:1521.0px;top:16.0px;width:231.0px;height:65.0px;background:#f7f6f4;border-radius:12px;border:2px solid #ddd7d2;box-sizing:border-box;"></div>
<svg class="r" style="left:1547px;top:33px" width="27" height="34" viewBox="0 0 27 34"><rect x="1" y="4" width="25" height="29" rx="2" fill="#c1694f"/><rect x="3.5" y="7" width="20" height="23.5" fill="#fff"/><rect x="6" y="2.5" width="15" height="6" rx="1.5" fill="#ccd6dd"/><circle cx="13.5" cy="2.5" r="2" fill="#292f33"/><g stroke="#99aab5" stroke-width="1.5"><line x1="6" y1="13" x2="13" y2="13"/><line x1="6" y1="17" x2="21" y2="17"/><line x1="6" y1="21" x2="21" y2="21"/><line x1="6" y1="25" x2="21" y2="25"/><line x1="12" y1="28.5" x2="21" y2="28.5"/></g></svg>
<div class="t" style="left:1590.0px;top:35.7px;font-size:28px;color:#37352f;font-weight:normal;letter-spacing:0.25px;">复制图表块</div>
<div class="r" style="left:2413.0px;top:25.0px;width:2.0px;height:47.0px;background:#d7d1cc;border-radius:0px;"></div>
<div class="t" style="left:2431.0px;top:37.3px;font-size:24px;color:#5f5a55;font-weight:normal;letter-spacing:0.67px;">数据源:</div>
<div class="r" style="left:2523.5px;top:19.5px;width:199.0px;height:59.0px;background:#f8f7f5;border-radius:12px;border:2px solid #ddd7d2;box-sizing:border-box;"></div>
<div class="t" style="left:2541.8px;top:35.7px;font-size:28px;color:#37352f;font-weight:normal;letter-spacing:-2.00px;">数据库</div>
<div class="t" style="left:2750.8px;top:34.6px;font-size:28px;color:#98b78b;font-weight:normal;letter-spacing:-0.30px;">转到 SQL</div>
<svg class="r" style="left:2878px;top:41px" width="24" height="18" viewBox="0 0 24 18" fill="none" stroke="#98b78b" stroke-width="3.2" stroke-linecap="round" stroke-linejoin="round"><path d="M3 9 H20"/><path d="M13.5 3 L20.5 9 L13.5 15"/></svg>
<div class="r" style="left:2940.0px;top:19.0px;width:60.0px;height:60.0px;background:#98b78b;border-radius:12px;"></div>
<svg class="r" style="left:2940px;top:18px" width="62" height="62" viewBox="0 0 62 62"><g transform="translate(28.5,32.8) rotate(-45)"><polygon points="-3,-2.2 -3,2.2 -21.5,0" fill="#99aab5"/><rect x="2" y="-7.5" width="11" height="15" fill="#be1931"/><rect x="10.5" y="-9.3" width="8.5" height="18.6" rx="4.2" fill="#dd2e44"/><rect x="-4.5" y="-12" width="8.5" height="24" rx="4.2" fill="#dd2e44"/></g></svg>
<div class="r" style="left:1348.5px;top:111.0px;width:1665.0px;height:776.0px;background:#fffdf9;border-radius:20px;border:2px solid #ddd7d2;box-sizing:border-box;"></div>
<div class="r" style="left:1375.0px;top:138.0px;width:1612.0px;height:722.5px;background:#fffdf9;border-radius:16px;border:2px solid #ddd7d2;box-sizing:border-box;"></div>
<div class="r" style="left:1348.0px;top:887.0px;width:1665.0px;height:25.0px;background:linear-gradient(90deg,rgba(249,248,245,1),rgba(249,248,245,0) 9%),linear-gradient(#f0efec,#f5f4f1);border-radius:0px;"></div>
<div class="r" style="left:1348.5px;top:911.5px;width:1665.0px;height:628.5px;background:#fdfcf9;border-radius:20px;border:2px solid #ddd7d2;box-sizing:border-box;"></div>
<div class="t" style="left:1374.8px;top:942.7px;font-size:26px;color:#5f5a55;font-weight:bold;letter-spacing:0.83px;">数据库查询模式</div>
<div class="t" style="left:1375.0px;top:977.4px;font-size:26px;color:#37352f;font-weight:normal;letter-spacing:2.50px;">标题</div>
<div class="r" style="left:1374.5px;top:1019.0px;width:409.5px;height:63.0px;background:#f8f7f5;border-radius:12px;border:2px solid #ddd7d2;box-sizing:border-box;"></div>
<div class="t" style="left:1392.6px;top:1038.2px;font-size:28px;color:#37352f;font-weight:normal;letter-spacing:-1.67px;">滴答事件</div>
<div class="t" style="left:1799.0px;top:983.9px;font-size:24px;color:#6e6b67;font-weight:normal;letter-spacing:0.50px;">颜色</div>
<div class="t" style="left:1799.0px;top:1038.0px;font-size:24px;color:#5f5a55;font-weight:normal;letter-spacing:-0.00px;">未设置颜色，使用默认配色</div>
<div class="r" style="left:2104.5px;top:1024.0px;width:131.0px;height:50.5px;background:#fefcf9;border-radius:12px;border:2px solid #ddd7d2;box-sizing:border-box;"></div>
<div class="t" style="left:2121.4px;top:1037.0px;font-size:24px;color:#37352f;font-weight:normal;letter-spacing:-0.00px;">添加颜色</div>
<div class="t" style="left:2252.6px;top:979.5px;font-size:26px;color:#37352f;font-weight:normal;letter-spacing:1.17px;">图表类型</div>
<div class="r" style="left:2252.5px;top:1022.0px;width:239.5px;height:58.0px;background:#f8f7f5;border-radius:12px;border:2px solid #ddd7d2;box-sizing:border-box;"></div>
<div class="t" style="left:2271.8px;top:1038.8px;font-size:28px;color:#37352f;font-weight:normal;letter-spacing:-2.00px;">统计图</div>
<div class="r" style="left:1374.5px;top:1098.5px;width:795.5px;height:224.5px;background:#fdfbf8;border-radius:18px;border:2px solid #ddd7d2;box-sizing:border-box;"></div>
<div class="t" style="left:1396.8px;top:1127.1px;font-size:28px;color:#5f5a55;font-weight:bold;letter-spacing:0.04px;">数据库查询参数（AV API）</div>
<div class="t" style="left:1938.2px;top:1127.2px;font-size:28px;color:#5f5a55;font-weight:normal;letter-spacing:0.33px;">显示 avID</div>
<div class="r" style="left:2077.0px;top:1120.0px;width:72.0px;height:40.0px;background:#dcd7d2;border-radius:20px;"></div>
<div class="r" style="left:2081.0px;top:1124.0px;width:32.0px;height:32.0px;background:#5f5a55;border-radius:16px;"></div>
<div class="t" style="left:1396.0px;top:1181.5px;font-size:26px;color:#37352f;font-weight:normal;letter-spacing:1.50px;">数据库</div>
<div class="t" style="left:1489.2px;top:1182.0px;font-size:24px;color:#6e6b67;font-weight:normal;">滴答</div>
<div class="r" style="left:1396.5px;top:1224.0px;width:475.5px;height:61.5px;background:#f8f7f5;border-radius:12px;border:2px solid #ddd7d2;box-sizing:border-box;"></div>
<div class="t" style="left:1414.8px;top:1241.7px;font-size:28px;color:#37352f;font-weight:normal;letter-spacing:-2.50px;">滴答</div>
<div class="t" style="left:1887.8px;top:1182.1px;font-size:26px;color:#37352f;font-weight:normal;letter-spacing:2.00px;">视图</div>
<div class="r" style="left:1888.5px;top:1224.0px;width:260.0px;height:61.5px;background:#f8f7f5;border-radius:12px;border:2px solid #ddd7d2;box-sizing:border-box;"></div>
<div class="t" style="left:1906.6px;top:1241.7px;font-size:28px;color:#37352f;font-weight:normal;letter-spacing:-2.00px;">全部</div>
<div class="r" style="left:2191.5px;top:1098.5px;width:796.0px;height:224.0px;background:#fdfbf8;border-radius:18px;border:2px solid #ddd7d2;box-sizing:border-box;"></div>
<div class="t" style="left:2213.4px;top:1129.1px;font-size:28px;color:#5f5a55;font-weight:bold;letter-spacing:-0.00px;">数据映射</div>
<div class="t" style="left:2739.4px;top:1127.3px;font-size:28px;color:#5f5a55;font-weight:normal;letter-spacing:0.20px;">合并相同 X</div>
<div class="r" style="left:2893.5px;top:1120.5px;width:73.0px;height:39.5px;background:#98b78b;border-radius:20px;"></div>
<div class="r" style="left:2930.5px;top:1124.0px;width:32.0px;height:32.0px;background:#fff;border-radius:16px;"></div>
<div class="t" style="left:2212.4px;top:1182.0px;font-size:26px;color:#37352f;font-weight:normal;letter-spacing:1.25px;">X 轴字段</div>
<div class="t" style="left:2469.2px;top:1182.0px;font-size:26px;color:#37352f;font-weight:normal;letter-spacing:1.50px;">排序</div>
<div class="t" style="left:2725.8px;top:1181.5px;font-size:26px;color:#37352f;font-weight:normal;letter-spacing:1.50px;">时间分桶</div>
<div class="r" style="left:2213.5px;top:1223.5px;width:238.5px;height:59.0px;background:#f8f7f5;border-radius:12px;border:2px solid #ddd7d2;box-sizing:border-box;"></div>
<div class="t" style="left:2230.6px;top:1240.1px;font-size:28px;color:#37352f;font-weight:normal;letter-spacing:-0.83px;">开始时间</div>
<div class="r" style="left:2469.5px;top:1223.5px;width:239.5px;height:59.0px;background:#f8f7f5;border-radius:12px;border:2px solid #ddd7d2;box-sizing:border-box;"></div>
<div class="t" style="left:2486.0px;top:1240.1px;font-size:28px;color:#37352f;font-weight:normal;letter-spacing:-2.00px;">升序</div>
<div class="r" style="left:2726.5px;top:1223.5px;width:239.5px;height:59.0px;background:#f8f7f5;border-radius:12px;border:2px solid #ddd7d2;box-sizing:border-box;"></div>
<div class="t" style="left:2743.6px;top:1239.6px;font-size:28px;color:#37352f;font-weight:normal;">日</div>
<div class="r" style="left:1374.5px;top:1341.0px;width:1612.5px;height:219.0px;background:#fdfbf8;border-radius:18px;border:2px solid #ddd7d2;box-sizing:border-box;"></div>
<div class="t" style="left:1398.0px;top:1376.1px;font-size:28px;color:#5f5a55;font-weight:bold;letter-spacing:-0.44px;">系列（Series）</div>
<div class="r" style="left:2834.5px;top:1362.5px;width:131.0px;height:51.0px;background:#f8f7f5;border-radius:12px;border:2px solid #ddd7d2;box-sizing:border-box;"></div>
<div class="t" style="left:2851.4px;top:1376.8px;font-size:24px;color:#37352f;font-weight:normal;letter-spacing:0.50px;">添加系列</div>
<div class="r" style="left:1397.0px;top:1431.5px;width:1568.5px;height:128.5px;background:#fefcf9;border-radius:18px;border:2px solid #ddd7d2;box-sizing:border-box;"></div>
<div class="r" style="left:1414.5px;top:1448.5px;width:354.5px;height:64.0px;background:#f8f7f5;border-radius:12px;border:2px solid #ddd7d2;box-sizing:border-box;"></div>
<div class="t" style="left:1433.4px;top:1467.7px;font-size:28px;color:#37352f;font-weight:normal;letter-spacing:-0.50px;">事件数量</div>
<div class="r" style="left:1782.5px;top:1448.5px;width:90.5px;height:64.0px;background:#f8f7f5;border-radius:12px;border:2px solid #ddd7d2;box-sizing:border-box;"></div>
<div class="t" style="left:1800.2px;top:1467.7px;font-size:28px;color:#37352f;font-weight:normal;letter-spacing:-0.50px;">折线</div>
<div class="r" style="left:1886.5px;top:1448.5px;width:62.5px;height:64.0px;background:#f8f7f5;border-radius:12px;border:2px solid #ddd7d2;box-sizing:border-box;"></div>
<div class="t" style="left:1905.0px;top:1468.2px;font-size:28px;color:#37352f;font-weight:normal;">左</div>
<div class="r" style="left:1962.5px;top:1448.5px;width:146.5px;height:64.0px;background:#f8f7f5;border-radius:12px;border:2px solid #ddd7d2;box-sizing:border-box;"></div>
<div class="t" style="left:1979.2px;top:1468.2px;font-size:28px;color:#37352f;font-weight:normal;letter-spacing:2.00px;">全天</div>
<div class="r" style="left:2122.5px;top:1448.5px;width:95.0px;height:64.0px;background:#f8f7f5;border-radius:12px;border:2px solid #ddd7d2;box-sizing:border-box;"></div>
<div class="t" style="left:2141.4px;top:1467.7px;font-size:28px;color:#37352f;font-weight:normal;letter-spacing:-1.00px;">计数</div>
<div class="r" style="left:2230.5px;top:1448.5px;width:99.0px;height:64.0px;background:#fefcf9;border-radius:12px;border:2px solid #ddd7d2;box-sizing:border-box;"></div>
<div class="t" style="left:2251.8px;top:1468.0px;font-size:28px;color:#37352f;font-weight:normal;letter-spacing:1.50px;">删除</div>
<div class="t" style="left:1387.0px;top:146.6px;font-size:36px;color:#464646;font-weight:bold;letter-spacing:-0.00px;">滴答事件</div>
<div class="t" style="left:1386.0px;top:203.0px;font-size:24px;color:#6e7079;font-weight:normal;letter-spacing:0.67px;">滴答 - 全部</div>
<div class="r" style="left:2104.0px;top:159.0px;width:50.0px;height:4.0px;background:#5470c6;border-radius:0px;"></div>
<svg class="r" style="left:2117px;top:149px" width="24" height="24"><circle cx="12" cy="11.8" r="11" fill="#5470c6"/></svg>
<div class="t" style="left:2164.0px;top:147.0px;font-size:24px;color:#333;font-weight:normal;letter-spacing:-0.00px;">事件数量</div>
<div class="t" style="left:1461.0px;top:262.7px;font-size:24px;color:#6e7079;font-weight:normal;letter-spacing:2.00px;">数量</div>
<div class="t" style="left:2874.8px;top:757.4px;font-size:24px;color:#6e7079;font-weight:normal;letter-spacing:2.50px;">日期</div>
<div class="t" style="left:1455.8px;top:755.8px;font-size:25px;color:#6e7079;font-weight:normal;">0</div>
<div class="t" style="left:1456.8px;top:691.6px;font-size:25px;color:#6e7079;font-weight:normal;">1</div>
<div class="t" style="left:1456.8px;top:627.5px;font-size:25px;color:#6e7079;font-weight:normal;">2</div>
<div class="t" style="left:1456.8px;top:562.3px;font-size:25px;color:#6e7079;font-weight:normal;">3</div>
<div class="t" style="left:1455.8px;top:498.2px;font-size:25px;color:#6e7079;font-weight:normal;">4</div>
<div class="t" style="left:1455.8px;top:434.0px;font-size:25px;color:#6e7079;font-weight:normal;">5</div>
<div class="t" style="left:1456.8px;top:369.8px;font-size:25px;color:#6e7079;font-weight:normal;">6</div>
<div class="t" style="left:1456.8px;top:305.7px;font-size:25px;color:#6e7079;font-weight:normal;">7</div>
<svg class="r" style="left:0;top:0" width="3018" height="1528">
<line x1="1486.0" y1="706.1" x2="2845.6" y2="706.1" stroke="#8e8c88" stroke-width="2.1" stroke-dasharray="7.7,4.3"/>
<line x1="1486.0" y1="641.8" x2="2845.6" y2="641.8" stroke="#8e8c88" stroke-width="2.1" stroke-dasharray="7.7,4.3"/>
<line x1="1486.0" y1="577.4" x2="2845.6" y2="577.4" stroke="#8e8c88" stroke-width="2.1" stroke-dasharray="7.7,4.3"/>
<line x1="1486.0" y1="513.1" x2="2845.6" y2="513.1" stroke="#8e8c88" stroke-width="2.1" stroke-dasharray="7.7,4.3"/>
<line x1="1486.0" y1="448.7" x2="2845.6" y2="448.7" stroke="#8e8c88" stroke-width="2.1" stroke-dasharray="7.7,4.3"/>
<line x1="1486.0" y1="384.3" x2="2845.6" y2="384.3" stroke="#8e8c88" stroke-width="2.1" stroke-dasharray="7.7,4.3"/>
<line x1="1486.0" y1="320.0" x2="2845.6" y2="320.0" stroke="#8e8c88" stroke-width="2.1" stroke-dasharray="7.7,4.3"/>
<path d="M1486.00,448.70 C1486.00,448.70 1491.62,706.14 1527.20,706.14 C1532.82,706.14 1547.80,706.14 1568.40,706.14 C1589.00,706.14 1599.97,706.14 1609.60,706.14 C1641.17,706.14 1630.20,577.42 1650.80,577.42 C1671.40,577.42 1675.26,706.14 1692.00,706.14 C1716.46,706.14 1712.60,513.06 1733.20,513.06 C1753.80,513.06 1740.31,706.14 1774.40,706.14 C1781.51,706.14 1795.00,706.14 1815.60,706.14 C1836.20,706.14 1836.20,706.14 1856.80,706.14 C1877.40,706.14 1883.57,706.14 1898.00,706.14 C1924.77,706.14 1912.43,641.78 1939.20,641.78 C1953.63,641.78 1965.97,641.78 1980.40,641.78 C2007.17,641.78 2012.26,613.89 2021.60,577.42 C2053.46,452.99 2042.20,319.98 2062.80,319.98 C2083.40,319.98 2076.87,450.26 2104.00,577.42 C2118.07,643.34 2113.63,706.14 2145.20,706.14 C2154.83,706.14 2165.80,706.14 2186.40,706.14 C2207.00,706.14 2207.00,706.14 2227.60,706.14 C2248.20,706.14 2248.20,706.14 2268.80,706.14 C2289.40,706.14 2300.37,706.14 2310.00,706.14 C2341.57,706.14 2330.60,577.42 2351.20,577.42 C2371.80,577.42 2375.66,706.14 2392.40,706.14 C2416.86,706.14 2409.14,513.06 2433.60,513.06 C2450.34,513.06 2443.23,641.78 2474.80,641.78 C2484.43,641.78 2501.57,641.78 2516.00,641.78 C2542.77,641.78 2536.60,706.14 2557.20,706.14 C2577.80,706.14 2577.80,641.78 2598.40,641.78 C2619.00,641.78 2612.83,706.14 2639.60,706.14 C2654.03,706.14 2660.20,706.14 2680.80,706.14 C2701.40,706.14 2701.40,706.14 2722.00,706.14 C2742.60,706.14 2742.60,706.14 2763.20,706.14 C2783.80,706.14 2783.80,706.14 2804.40,706.14 C2825.00,706.14 2845.60,706.14 2845.60,706.14 L2845.60,771 L1486.00,771 Z" fill="#5470c6" fill-opacity="0.7"/>
<path d="M1486.00,448.70 C1486.00,448.70 1491.62,706.14 1527.20,706.14 C1532.82,706.14 1547.80,706.14 1568.40,706.14 C1589.00,706.14 1599.97,706.14 1609.60,706.14 C1641.17,706.14 1630.20,577.42 1650.80,577.42 C1671.40,577.42 1675.26,706.14 1692.00,706.14 C1716.46,706.14 1712.60,513.06 1733.20,513.06 C1753.80,513.06 1740.31,706.14 1774.40,706.14 C1781.51,706.14 1795.00,706.14 1815.60,706.14 C1836.20,706.14 1836.20,706.14 1856.80,706.14 C1877.40,706.14 1883.57,706.14 1898.00,706.14 C1924.77,706.14 1912.43,641.78 1939.20,641.78 C1953.63,641.78 1965.97,641.78 1980.40,641.78 C2007.17,641.78 2012.26,613.89 2021.60,577.42 C2053.46,452.99 2042.20,319.98 2062.80,319.98 C2083.40,319.98 2076.87,450.26 2104.00,577.42 C2118.07,643.34 2113.63,706.14 2145.20,706.14 C2154.83,706.14 2165.80,706.14 2186.40,706.14 C2207.00,706.14 2207.00,706.14 2227.60,706.14 C2248.20,706.14 2248.20,706.14 2268.80,706.14 C2289.40,706.14 2300.37,706.14 2310.00,706.14 C2341.57,706.14 2330.60,577.42 2351.20,577.42 C2371.80,577.42 2375.66,706.14 2392.40,706.14 C2416.86,706.14 2409.14,513.06 2433.60,513.06 C2450.34,513.06 2443.23,641.78 2474.80,641.78 C2484.43,641.78 2501.57,641.78 2516.00,641.78 C2542.77,641.78 2536.60,706.14 2557.20,706.14 C2577.80,706.14 2577.80,641.78 2598.40,641.78 C2619.00,641.78 2612.83,706.14 2639.60,706.14 C2654.03,706.14 2660.20,706.14 2680.80,706.14 C2701.40,706.14 2701.40,706.14 2722.00,706.14 C2742.60,706.14 2742.60,706.14 2763.20,706.14 C2783.80,706.14 2783.80,706.14 2804.40,706.14 C2825.00,706.14 2845.60,706.14 2845.60,706.14" fill="none" stroke="#5470c6" stroke-width="4.5"/>
<circle cx="1486.00" cy="448.70" r="7" fill="#5470c6"/>
<circle cx="1527.20" cy="706.14" r="7" fill="#5470c6"/>
<circle cx="1568.40" cy="706.14" r="7" fill="#5470c6"/>
<circle cx="1609.60" cy="706.14" r="7" fill="#5470c6"/>
<circle cx="1650.80" cy="577.42" r="7" fill="#5470c6"/>
<circle cx="1692.00" cy="706.14" r="7" fill="#5470c6"/>
<circle cx="1733.20" cy="513.06" r="7" fill="#5470c6"/>
<circle cx="1774.40" cy="706.14" r="7" fill="#5470c6"/>
<circle cx="1815.60" cy="706.14" r="7" fill="#5470c6"/>
<circle cx="1856.80" cy="706.14" r="7" fill="#5470c6"/>
<circle cx="1898.00" cy="706.14" r="7" fill="#5470c6"/>
<circle cx="1939.20" cy="641.78" r="7" fill="#5470c6"/>
<circle cx="1980.40" cy="641.78" r="7" fill="#5470c6"/>
<circle cx="2021.60" cy="577.42" r="7" fill="#5470c6"/>
<circle cx="2062.80" cy="319.98" r="7" fill="#5470c6"/>
<circle cx="2104.00" cy="577.42" r="7" fill="#5470c6"/>
<circle cx="2145.20" cy="706.14" r="7" fill="#5470c6"/>
<circle cx="2186.40" cy="706.14" r="7" fill="#5470c6"/>
<circle cx="2227.60" cy="706.14" r="7" fill="#5470c6"/>
<circle cx="2268.80" cy="706.14" r="7" fill="#5470c6"/>
<circle cx="2310.00" cy="706.14" r="7" fill="#5470c6"/>
<circle cx="2351.20" cy="577.42" r="7" fill="#5470c6"/>
<circle cx="2392.40" cy="706.14" r="7" fill="#5470c6"/>
<circle cx="2433.60" cy="513.06" r="7" fill="#5470c6"/>
<circle cx="2474.80" cy="641.78" r="7" fill="#5470c6"/>
<circle cx="2516.00" cy="641.78" r="7" fill="#5470c6"/>
<circle cx="2557.20" cy="706.14" r="7" fill="#5470c6"/>
<circle cx="2598.40" cy="641.78" r="7" fill="#5470c6"/>
<circle cx="2639.60" cy="706.14" r="7" fill="#5470c6"/>
<circle cx="2680.80" cy="706.14" r="7" fill="#5470c6"/>
<circle cx="2722.00" cy="706.14" r="7" fill="#5470c6"/>
<circle cx="2763.20" cy="706.14" r="7" fill="#5470c6"/>
<circle cx="2804.40" cy="706.14" r="7" fill="#5470c6"/>
<circle cx="2845.60" cy="706.14" r="7" fill="#5470c6"/>
<path d="M1492,771 H2848.6 Q2851.6,771 2851.6,774 V784.2 H1492Z" fill="#dfe4ef"/>
<rect x="1492" y="784.2" width="1359.6" height="1.8" fill="#d0d9ec"/>
<rect x="1492" y="786" width="1359" height="57.7" fill="#e7ecf8"/>
<line x1="1486.0" y1="772" x2="2845.6" y2="772" stroke="#c8cbd5" stroke-width="1.6" stroke-dasharray="7.7,4.3"/>
<path d="M1491.6,843.7 L1491.6,808.6 L1532.8,832.7 L1574.0,832.7 L1615.2,832.7 L1656.4,820.6 L1697.6,832.7 L1738.8,814.6 L1780.0,832.7 L1821.2,832.7 L1862.3,832.7 L1903.5,832.7 L1944.7,826.6 L1985.9,826.6 L2027.1,820.6 L2068.3,796.5 L2109.5,820.6 L2150.7,832.7 L2191.9,832.7 L2233.1,832.7 L2274.3,832.7 L2315.5,832.7 L2356.7,820.6 L2397.9,832.7 L2439.1,814.6 L2480.3,826.6 L2521.4,826.6 L2562.6,832.7 L2603.8,826.6 L2645.0,832.7 L2686.2,832.7 L2727.4,832.7 L2768.6,832.7 L2809.8,832.7 L2851.0,832.7 L2851,843.7 Z" fill="#d3ddf6"/>
<path d="M1491.6,808.6 L1532.8,832.7 L1574.0,832.7 L1615.2,832.7 L1656.4,820.6 L1697.6,832.7 L1738.8,814.6 L1780.0,832.7 L1821.2,832.7 L1862.3,832.7 L1903.5,832.7 L1944.7,826.6 L1985.9,826.6 L2027.1,820.6 L2068.3,796.5 L2109.5,820.6 L2150.7,832.7 L2191.9,832.7 L2233.1,832.7 L2274.3,832.7 L2315.5,832.7 L2356.7,820.6 L2397.9,832.7 L2439.1,814.6 L2480.3,826.6 L2521.4,826.6 L2562.6,832.7 L2603.8,826.6 L2645.0,832.7 L2686.2,832.7 L2727.4,832.7 L2768.6,832.7 L2809.8,832.7 L2851.0,832.7" fill="none" stroke="#8fb0f7" stroke-width="1.6"/>
<line x1="1493.5" y1="784" x2="1493.5" y2="844" stroke="#acb8d1" stroke-width="2.2"/>
<rect x="1487.0" y="795" width="13" height="38" rx="4" fill="#fff" stroke="#acb8d1" stroke-width="2"/>
<line x1="2849.5" y1="784" x2="2849.5" y2="844" stroke="#acb8d1" stroke-width="2.2"/>
<rect x="2843.0" y="795" width="13" height="38" rx="4" fill="#fff" stroke="#acb8d1" stroke-width="2"/>
<g stroke="#fff" stroke-width="1.5"><line x1="2167" y1="775" x2="2167" y2="783"/><line x1="2171" y1="775" x2="2171" y2="783"/><line x1="2175" y1="775" x2="2175" y2="783"/></g>
</svg>
<div class="t" style="left:1479.0px;top:404.2px;font-size:25px;color:#333;font-weight:normal;">5</div>
<div class="t" style="left:1519.7px;top:661.8px;font-size:25px;color:#333;font-weight:normal;">1</div>
<div class="t" style="left:1560.9px;top:661.8px;font-size:25px;color:#333;font-weight:normal;">1</div>
<div class="t" style="left:1602.1px;top:661.8px;font-size:25px;color:#333;font-weight:normal;">1</div>
<div class="t" style="left:1643.8px;top:532.5px;font-size:25px;color:#333;font-weight:normal;">3</div>
<div class="t" style="left:1684.5px;top:661.8px;font-size:25px;color:#333;font-weight:normal;">1</div>
<div class="t" style="left:1726.2px;top:468.4px;font-size:25px;color:#333;font-weight:normal;">4</div>
<div class="t" style="left:1766.9px;top:661.8px;font-size:25px;color:#333;font-weight:normal;">1</div>
<div class="t" style="left:1808.1px;top:661.8px;font-size:25px;color:#333;font-weight:normal;">1</div>
<div class="t" style="left:1849.3px;top:661.8px;font-size:25px;color:#333;font-weight:normal;">1</div>
<div class="t" style="left:1890.5px;top:661.8px;font-size:25px;color:#333;font-weight:normal;">1</div>
<div class="t" style="left:1932.2px;top:597.7px;font-size:25px;color:#333;font-weight:normal;">2</div>
<div class="t" style="left:1973.4px;top:597.7px;font-size:25px;color:#333;font-weight:normal;">2</div>
<div class="t" style="left:2014.6px;top:532.5px;font-size:25px;color:#333;font-weight:normal;">3</div>
<div class="t" style="left:2055.8px;top:275.9px;font-size:25px;color:#333;font-weight:normal;">7</div>
<div class="t" style="left:2097.0px;top:532.5px;font-size:25px;color:#333;font-weight:normal;">3</div>
<div class="t" style="left:2137.7px;top:661.8px;font-size:25px;color:#333;font-weight:normal;">1</div>
<div class="t" style="left:2178.9px;top:661.8px;font-size:25px;color:#333;font-weight:normal;">1</div>
<div class="t" style="left:2220.1px;top:661.8px;font-size:25px;color:#333;font-weight:normal;">1</div>
<div class="t" style="left:2261.3px;top:661.8px;font-size:25px;color:#333;font-weight:normal;">1</div>
<div class="t" style="left:2302.5px;top:661.8px;font-size:25px;color:#333;font-weight:normal;">1</div>
<div class="t" style="left:2344.2px;top:532.5px;font-size:25px;color:#333;font-weight:normal;">3</div>
<div class="t" style="left:2384.9px;top:661.8px;font-size:25px;color:#333;font-weight:normal;">1</div>
<div class="t" style="left:2426.6px;top:468.4px;font-size:25px;color:#333;font-weight:normal;">4</div>
<div class="t" style="left:2467.8px;top:597.7px;font-size:25px;color:#333;font-weight:normal;">2</div>
<div class="t" style="left:2509.0px;top:597.7px;font-size:25px;color:#333;font-weight:normal;">2</div>
<div class="t" style="left:2549.7px;top:661.8px;font-size:25px;color:#333;font-weight:normal;">1</div>
<div class="t" style="left:2591.4px;top:597.7px;font-size:25px;color:#333;font-weight:normal;">2</div>
<div class="t" style="left:2632.1px;top:661.8px;font-size:25px;color:#333;font-weight:normal;">1</div>
<div class="t" style="left:2673.3px;top:661.8px;font-size:25px;color:#333;font-weight:normal;">1</div>
<div class="t" style="left:2714.5px;top:661.8px;font-size:25px;color:#333;font-weight:normal;">1</div>
<div class="t" style="left:2755.7px;top:661.8px;font-size:25px;color:#333;font-weight:normal;">1</div>
<div class="t" style="left:2796.9px;top:661.8px;font-size:25px;color:#333;font-weight:normal;">1</div>
<div class="t" style="left:2838.1px;top:661.8px;font-size:25px;color:#333;font-weight:normal;">1</div>
<div class="t" style="left:1418.9px;top:784.0px;font-size:25px;color:#6e7079;font-weight:normal;letter-spacing:0.33px;">1970-01-01</div>
<div class="t" style="left:1625.9px;top:784.0px;font-size:25px;color:#6e7079;font-weight:normal;letter-spacing:0.56px;">2025-07-11</div>
<div class="t" style="left:1831.4px;top:784.0px;font-size:25px;color:#6e7079;font-weight:normal;letter-spacing:0.22px;">2025-08-04</div>
<div class="t" style="left:2037.9px;top:784.0px;font-size:25px;color:#6e7079;font-weight:normal;letter-spacing:0.56px;">2025-08-11</div>
<div class="t" style="left:2243.9px;top:784.0px;font-size:25px;color:#6e7079;font-weight:normal;letter-spacing:0.33px;">2025-08-20</div>
<div class="t" style="left:2449.9px;top:784.0px;font-size:25px;color:#6e7079;font-weight:normal;letter-spacing:0.33px;">2025-08-28</div>
<div class="t" style="left:2655.9px;top:784.0px;font-size:25px;color:#6e7079;font-weight:normal;letter-spacing:0.33px;">2025-09-08</div>
</body></html>
